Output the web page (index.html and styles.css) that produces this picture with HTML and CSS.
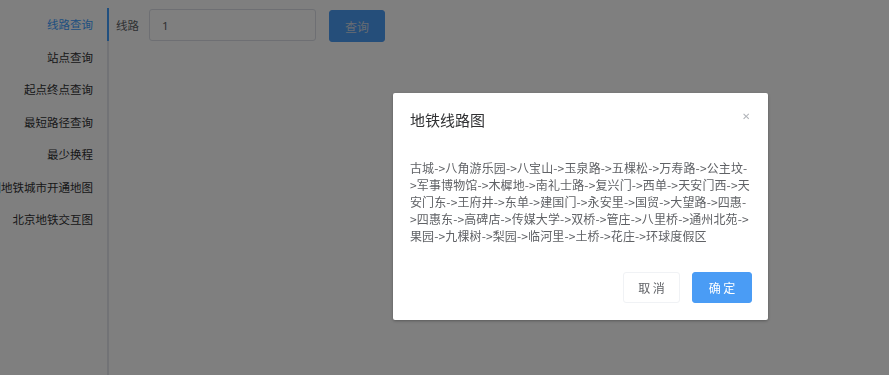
FILE: index.html
```html
<!DOCTYPE html>
<html lang="zh-CN">
<head>
    <meta charset="UTF-8">
    <meta name="viewport" content="width=device-width, initial-scale=1.0">
    <title>地铁线路查询</title>
    <link rel="stylesheet" href="styles.css">
</head>
<body>

    <div class="app">
        <div class="tabs-nav">
            <div class="tab-item active">线路查询</div>
            <div class="tab-item">站点查询</div>
            <div class="tab-item">起点终点查询</div>
            <div class="tab-item">最短路径查询</div>
            <div class="tab-item">最少换程</div>
            <div class="tab-item">全国地铁城市开通地图</div>
            <div class="tab-item">北京地铁交互图</div>
        </div>

        <div class="main">
            <form class="search-row">
                <label for="line" class="search-label">线路</label>
                <input type="text" id="line" class="search-input" value="1">
                <button type="button" class="btn btn-primary btn-query">查询</button>
            </form>
        </div>
    </div>

    <div class="mask"></div>

    <div class="dialog">
        <div class="dialog-header">
            <span class="dialog-title">地铁线路图</span>
            <span class="dialog-close">&#x2715;</span>
        </div>
        <div class="dialog-body">古城-&gt;八角游乐园-&gt;八宝山-&gt;玉泉路-&gt;五棵松-&gt;万寿路-&gt;公主坟-&gt;军事博物馆-&gt;木樨地-&gt;南礼士路-&gt;复兴门-&gt;西单-&gt;天安门西-&gt;天安门东-&gt;王府井-&gt;东单-&gt;建国门-&gt;永安里-&gt;国贸-&gt;大望路-&gt;四惠-&gt;四惠东-&gt;高碑店-&gt;传媒大学-&gt;双桥-&gt;管庄-&gt;八里桥-&gt;通州北苑-&gt;果园-&gt;九棵树-&gt;梨园-&gt;临河里-&gt;土桥-&gt;花庄-&gt;环球度假区</div>
        <div class="dialog-footer">
            <button type="button" class="btn btn-default">取 消</button>
            <button type="button" class="btn btn-primary">确 定</button>
        </div>
    </div>

</body>
</html>
```

FILE: styles.css
```css
    body {
        font-family: "Noto Sans CJK SC", "Noto Sans", sans-serif;
        margin: 0;
        background: #fff;
        color: #303133;
        overflow: hidden;
    }

    .app {
        display: flex;
        height: 100vh;
        padding-top: 8px;
        box-sizing: border-box;
    }

    /* onglets a gauche */
    .tabs-nav {
        width: 107px;
        flex-shrink: 0;
        border-right: 2px solid #e4e7ed;
    }

    .tab-item {
        position: relative;
        height: 32.5px;
        display: flex;
        align-items: center;
        justify-content: flex-end;
        padding-right: 14px;
        white-space: nowrap;
        font-size: 11.5px;
        color: #303133;
    }

    .tab-item.active {
        color: #409eff;
    }

    .tab-item.active::after {
        content: "";
        position: absolute;
        right: -2px;
        top: 0;
        bottom: 0;
        width: 2px;
        background: #409eff;
    }

    .main {
        flex: 1;
        padding-left: 7px;
    }

    .search-row {
        display: flex;
        align-items: center;
        margin: 0;
    }

    .search-label {
        font-size: 11.5px;
        color: #606266;
        width: 33px;
    }

    .search-input {
        width: 167px;
        height: 32px;
        box-sizing: border-box;
        border: 1px solid #dcdfe6;
        border-radius: 3px;
        padding: 0 12px;
        font-size: 11.5px;
        color: #606266;
        font-family: "Noto Sans", sans-serif;
        outline: none;
    }

    .btn {
        height: 31px;
        border-radius: 3px;
        font-size: 12px;
        font-family: "Noto Sans CJK SC", sans-serif;
        cursor: pointer;
        padding: 0;
    }

    .btn-primary {
        background: #4a9cf5;
        border: 1px solid #4a9cf5;
        color: #fff;
    }

    .btn-default {
        background: #fff;
        border: 1px solid #f0f2f5;
        color: #606266;
    }

    .btn-query {
        width: 56px;
        height: 32px;
        margin-left: 13px;
        margin-top: 2px;
        color: #d0d8e4;
    }

    .mask {
        position: fixed;
        inset: 0;
        background: rgba(0, 0, 0, 0.5);
    }

    /* fenetre modale */
    .dialog {
        position: absolute;
        left: 393px;
        top: 93px;
        width: 375px;
        height: 227px;
        background: #fff;
        border-radius: 2px;
        box-shadow: 0 1px 3px rgba(0, 0, 0, 0.3);
        box-sizing: border-box;
        display: flex;
        flex-direction: column;
    }

    .dialog-header {
        display: flex;
        justify-content: space-between;
        align-items: center;
        padding: 16px 17px 0 17px;
        height: 20px;
    }

    .dialog-title {
        font-size: 15px;
        color: #303133;
    }

    .dialog-close {
        font-size: 10px;
        color: #b0b3b8;
        margin-right: 1px;
        margin-top: -8px;
    }

    .dialog-body {
        padding: 30px 17px 0 17px;
        font-size: 12px;
        line-height: 17px;
        letter-spacing: 0.12px;
        word-break: break-all;
        color: #606266;
    }

    .dialog-footer {
        margin-top: auto;
        display: flex;
        justify-content: flex-end;
        gap: 12px;
        padding: 0 16px 17px 0;
    }

    .dialog-footer .btn-default {
        width: 57px;
    }

    .dialog-footer .btn-primary {
        width: 60px;
    }
```
